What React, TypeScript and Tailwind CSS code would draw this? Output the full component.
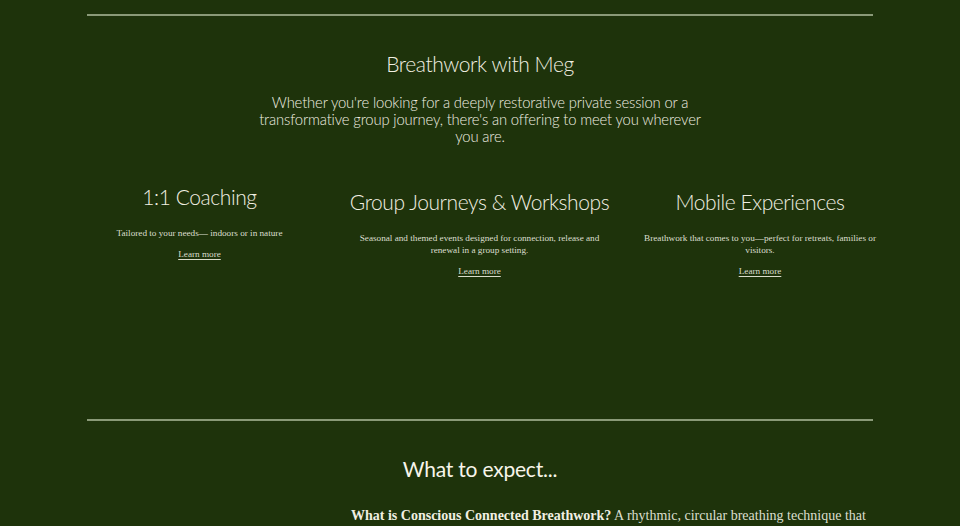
import React from "react";

const head = { fontFamily: "Lato, 'Open Sans', sans-serif" } as React.CSSProperties;
const serif = { fontFamily: "'Liberation Serif', 'DejaVu Serif', serif" } as React.CSSProperties;

function Offer({ title, text, mt, w, pw }: { title: string; text: React.ReactNode; mt: string; w: string; pw: string }) {
  return (
    <div className={`flex flex-col items-center text-center ${w}`}>
      <h3 className={`text-[21px] leading-[28px] tracking-[-0.02em] whitespace-nowrap text-[#f1efe2] font-light ${mt}`} style={head}>{title}</h3>
      <p className={`mt-[16px] shrink-0 text-[9.2px] leading-[12px] text-[#dcdfcf] ${pw}`} style={serif}>{text}</p>
      <a className="mt-[9px] text-[9.2px] leading-[12px] text-[#d9dccb] underline underline-offset-2" style={serif}>Learn more</a>
    </div>
  );
}

export default function App() {
  return (
    <div className="w-[960px] h-[526px] overflow-hidden bg-[#1e330b]">
      <div className="mx-[87px] pt-[14px]">
        <div className="h-[2px] bg-[#8a9a78]" />
        <div className="flex flex-col items-center">
          <h2 className="mt-[33px] text-[21px] leading-[30px] tracking-[-0.02em] text-[#f1efe2] font-light" style={head}>Breathwork with Meg</h2>
          <p className="mt-[15px] w-[450px] text-center text-[14.8px] leading-[17px] tracking-[-0.01em] text-[#f1efe2] font-light" style={head}>
            Whether you're looking for a deeply restorative private session or a transformative group journey, there's an offering to meet you wherever you are.
          </p>
        </div>
        <div className="mt-[38px] h-[234px] flex justify-between items-start">
          <Offer title="1:1  Coaching" mt="mt-0" w="w-[225px]" pw="w-[225px]" text="Tailored to your needs— indoors or in nature" />
          <Offer title="Group Journeys & Workshops" mt="mt-[5px]" w="w-[262px]" pw="w-[262px]" text="Seasonal and themed events designed for connection, release and renewal in a group setting." />
          <Offer title="Mobile Experiences" mt="mt-[5px]" w="w-[226px]" pw="w-[238px]" text="Breathwork that comes to you—perfect for retreats, families or visitors." />
        </div>
        <div className="mt-[2px] h-[2px] bg-[#8a9a78]" />
        <div className="flex flex-col items-center">
          <h2 className="mt-[33px] text-[21px] leading-[30px] tracking-[-0.01em] text-[#f7f5ea]" style={head}>What to expect...</h2>
        </div>
        <p className="mt-[22px] ml-[264px] text-[14px] leading-[20px] text-[#dcdfcf] whitespace-nowrap" style={serif}>
          <b className="text-[#f1efe2]">What is Conscious Connected Breathwork?</b> A rhythmic, circular breathing technique that
        </p>
      </div>
    </div>
  );
}
